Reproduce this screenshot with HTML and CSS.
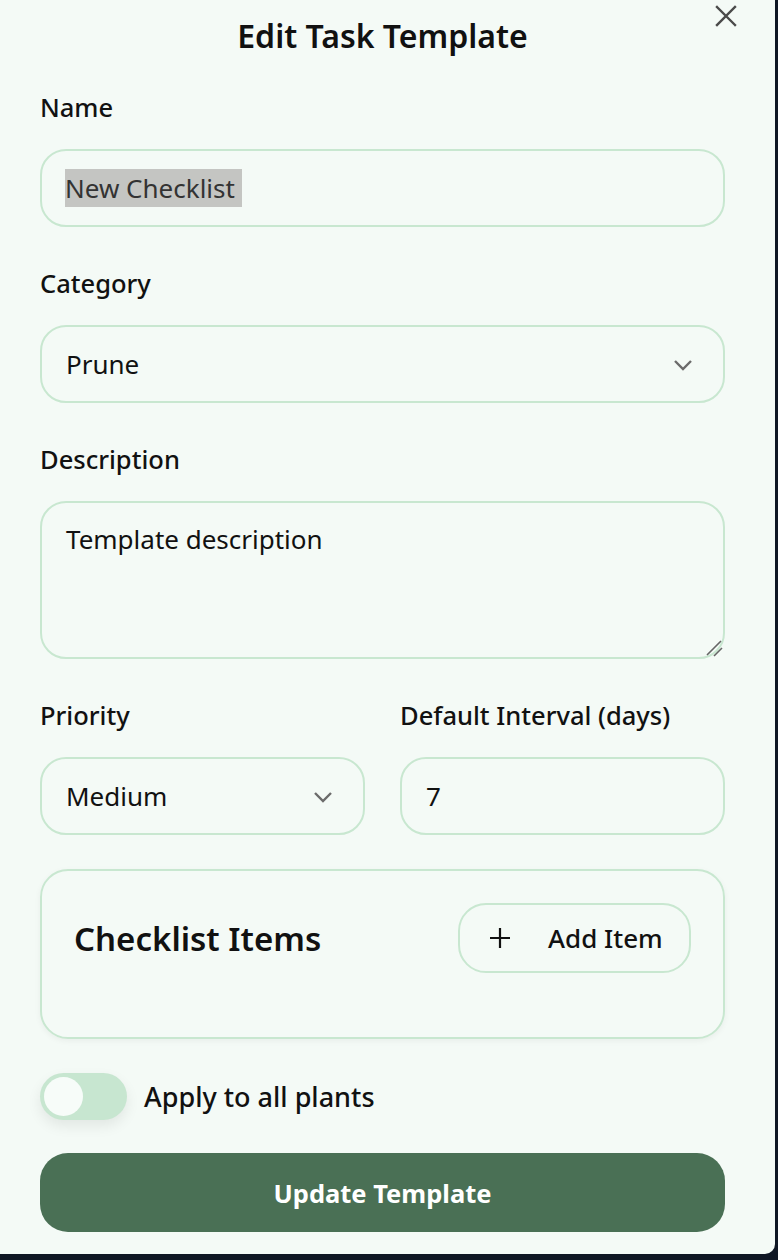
FILE: index.html
```html
<!DOCTYPE html>
<html lang="en">
<head>
<meta charset="utf-8">
<title>Edit Task Template</title>
<link rel="stylesheet" href="styles.css">
</head>
<body>
<div class="modal">
  <button class="close" aria-label="Close">
    <svg width="24" height="24" viewBox="0 0 24 24"><path d="M3 3 L21 21 M21 3 L3 21" stroke="#4a4a4a" stroke-width="2.4" stroke-linecap="square" fill="none"/></svg>
  </button>
  <h1 class="title">Edit Task Template</h1>

  <div class="field first">
    <label class="label">Name</label>
    <div class="input"><span class="selected">New Checklist </span></div>
  </div>

  <div class="field">
    <label class="label">Category</label>
    <div class="input select">Prune
      <svg class="chev" width="20" height="12" viewBox="0 0 20 12"><path d="M2 2 L10 10 L18 2" stroke="#6b6b6b" stroke-width="2.4" fill="none"/></svg>
    </div>
  </div>

  <div class="field">
    <label class="label">Description</label>
    <div class="input textarea">Template description
      <svg class="grip" width="18" height="18" viewBox="0 0 18 18"><path d="M2 16 L16 2 M9 17 L17 9" stroke="#666" stroke-width="1.6" fill="none"/></svg>
    </div>
  </div>

  <div class="row">
    <div class="field col">
      <label class="label">Priority</label>
      <div class="input select">Medium
        <svg class="chev" width="20" height="12" viewBox="0 0 20 12"><path d="M2 2 L10 10 L18 2" stroke="#6b6b6b" stroke-width="2.4" fill="none"/></svg>
      </div>
    </div>
    <div class="field col">
      <label class="label">Default Interval (days)</label>
      <div class="input">7</div>
    </div>
  </div>

  <div class="card">
    <div class="card-head">
      <h2 class="card-title">Checklist Items</h2>
      <button class="add">
        <svg width="24" height="24" viewBox="0 0 24 24"><path d="M12 2 V22 M2 12 H22" stroke="#111" stroke-width="2.2" fill="none"/></svg>
        <span>Add Item</span>
      </button>
    </div>
  </div>

  <div class="toggle-row">
    <div class="toggle"><div class="knob"></div></div>
    <span class="toggle-label">Apply to all plants</span>
  </div>

  <button class="submit">Update Template</button>
</div>
</body>
</html>
```

FILE: styles.css
```css
html, body {
  margin: 0;
  padding: 0;
}
body {
  background: #0f1724;
  width: 778px;
  height: 1260px;
  font-family: "Noto Sans", "Open Sans", sans-serif;
  color: #111;
}
.modal {
  position: relative;
  box-sizing: border-box;
  width: 775px;
  height: 1254px;
  background: #f4faf6;
  border-bottom-right-radius: 10px;
  padding: 14px 50px 0 40px;
  display: flex;
  flex-direction: column;
}
.close {
  position: absolute;
  top: 4px;
  right: 37px;
  background: none;
  border: none;
  padding: 0;
  width: 24px;
  height: 24px;
}
.title {
  margin: 0;
  text-align: center;
  font-size: 32px;
  font-weight: 600;
  line-height: 44px;
  color: #111;
}
.field {
  display: flex;
  flex-direction: column;
}
.label {
  font-size: 25.5px;
  font-weight: 500;
  line-height: 32px;
  margin-top: 40px;
  margin-bottom: 26px;
}
.field.first .label { margin-top: 33px; }
.input {
  position: relative;
  box-sizing: border-box;
  height: 78px;
  border: 2px solid #c8e7d0;
  border-radius: 26px;
  padding: 0 24px;
  display: flex;
  align-items: center;
  font-size: 26px;
  color: #111;
}
.selected {
  background: #c4c5c2;
  color: #333;
  padding: 1px 0;
  margin-left: -1px;
  white-space: pre;
}
.select .chev {
  position: absolute;
  right: 30px;
  top: 32px;
}
.textarea {
  height: 158px;
  align-items: flex-start;
  padding-top: 18px;
}
.grip {
  position: absolute;
  right: 0px;
  bottom: 0px;
}
.row {
  display: flex;
  gap: 35px;
}
.col {
  flex: 1;
}
.card {
  margin-top: 34px;
  box-sizing: border-box;
  height: 170px;
  border: 2px solid #c8e7d0;
  border-radius: 28px;
  box-shadow: 0 2px 6px rgba(0,0,0,0.05);
  padding: 32px 32px 0 32px;
}
.card-head {
  display: flex;
  align-items: center;
  justify-content: space-between;
}
.card-title {
  margin: 0;
  font-size: 33px;
  font-weight: 600;
}
.add {
  box-sizing: border-box;
  width: 233px;
  height: 70px;
  border: 2px solid #c8e7d0;
  border-radius: 28px;
  background: transparent;
  display: flex;
  align-items: center;
  padding: 0 0 0 28px;
  gap: 36px;
  font-family: inherit;
  font-size: 26px;
  font-weight: 500;
  color: #111;
}
.toggle-row {
  margin-top: 34px;
  display: flex;
  align-items: center;
  gap: 17px;
}
.toggle {
  position: relative;
  width: 87px;
  height: 47px;
  border-radius: 24px;
  background: #c7e6d0;
  box-shadow: 0 6px 14px rgba(0,0,0,0.08);
}
.knob {
  position: absolute;
  left: 4px;
  top: 4px;
  width: 39px;
  height: 39px;
  border-radius: 50%;
  background: #f7fcf9;
}
.toggle-label {
  font-size: 27px;
  font-weight: 500;
}
.submit {
  margin-top: 33px;
  height: 79px;
  border: none;
  border-radius: 28px;
  background: #4a7055;
  color: #fff;
  font-family: inherit;
  font-size: 25.5px;
  font-weight: 700;
}
```
